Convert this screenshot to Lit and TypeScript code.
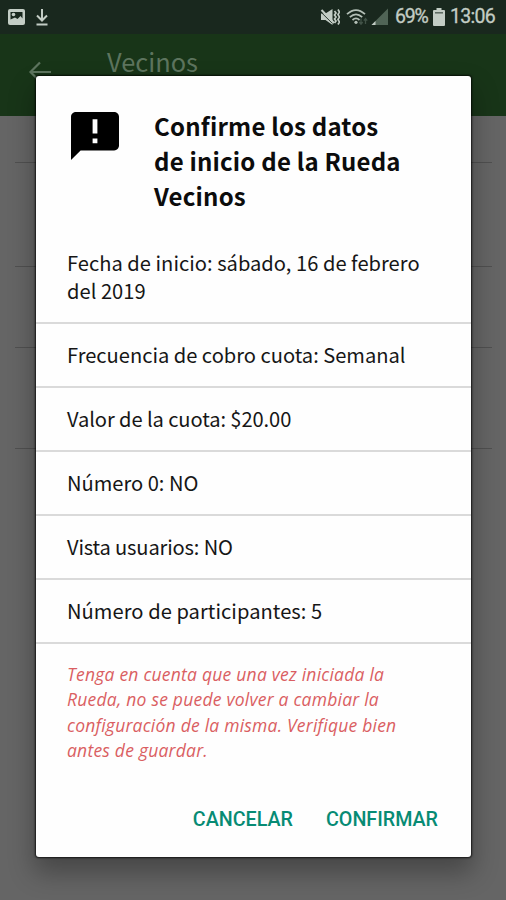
import { LitElement, html, css } from "lit";
import { customElement } from "lit/decorators.js";

const ROWS = [
  { text: "Frecuencia de cobro cuota: Semanal", cls: "" },
  { text: "Valor de la cuota: $20.00", cls: "tight" },
  { text: "Número 0: NO", cls: "" },
  { text: "Vista usuarios: NO", cls: "tighter" },
  { text: "Número de participantes: 5", cls: "loose" },
];

const WARNING = [
  "Tenga en cuenta que una vez iniciada la",
  "Rueda, no se puede volver a cambiar la",
  "configuración de la misma. Verifique bien",
  "antes de guardar.",
];

@customElement("status-bar")
export class StatusBar extends LitElement {
  static styles = css`
    :host {
      display: flex;
      align-items: center;
      height: 34px;
      box-sizing: border-box;
      padding: 0 8px 0 7px;
      background: #19281e;
      color: #c3cdc5;
      font: 400 19.5px/36px Roboto, sans-serif;
      -webkit-text-stroke: 0.3px #c3cdc5;
    }
    svg { display: block; flex: none; }
    .download { margin-left: 8px; }
    .mute { margin-left: auto; }
    .wifi { margin-left: 6px; }
    .signal { margin-left: 3px; }
    .percent { margin-left: 6px; width: 35px; letter-spacing: -1.2px; white-space: nowrap; }
    .battery { margin-left: 3px; }
    .clock { margin-left: 5px; width: 48px; letter-spacing: -0.7px; white-space: nowrap; }
  `;
  render() {
    return html`
      <svg width="19" height="18" viewBox="0 0 19 18">
        <rect x="1" y="1" width="17" height="16" rx="2" fill="#c3cdc5" />
        <path d="M3.5 4h12v6.500l-2-2.500-3 3-2.500-1.500-4.500 2z" fill="#19281e" />
        <circle cx="6.5" cy="6.500" r="1.800" fill="#c3cdc5" />
      </svg>
      <svg class="download" width="16" height="18" viewBox="0 0 16 18" fill="none" stroke="#c3cdc5" stroke-width="2">
        <path d="M8 1v11M3 7.5l5 5 5-5M2.500 16.500h11" />
      </svg>
      <svg class="mute" width="20" height="18" viewBox="0 0 20 18">
        <path d="M1 5.500h4.500l7-4.500v16l-7-5H1z" fill="#c3cdc5" />
        <path d="M0 3.200L12 15" stroke="#19281e" stroke-width="0.900" />
        <path d="M1.500 2L14 15" stroke="#c3cdc5" stroke-width="2" />
        <path d="M14.500 3l1.500 2-1.500 2 1.500 2-1.500 2 1.500 2-1.500 2M18 1.500l1.500 2.500-1.500 2.500 1.500 2.500-1.500 2.500 1.500 2.500-1.500 2.500" fill="none" stroke="#c3cdc5" stroke-width="1.700" />
      </svg>
      <svg class="wifi" width="22" height="18" viewBox="0 0 22 18" fill="none" stroke="#b3bfb6" stroke-width="1.800">
        <path d="M1 6.200Q10 -2 19 6.200M3.800 9.200Q10 3.500 16.200 9.200M6.500 12Q10 8.800 13.500 12" />
        <circle cx="10" cy="14.300" r="1.600" fill="#b3bfb6" stroke="none" />
        <path d="M15 10.500v5.500M13.300 14l1.700 2.200 1.700-2.200M19.500 16v-5.500M17.800 12.700l1.700-2.200 1.700 2.200" stroke="#415247" stroke-width="1.300" />
      </svg>
      <svg class="signal" width="18" height="18" viewBox="0 0 18 18">
        <path d="M17 .5V17H.5z" fill="#506456" />
        <path d="M4.500 13v4H.5z" fill="#c3cdc5" />
      </svg>
      <span class="percent">69%</span>
      <svg class="battery" width="12" height="18" viewBox="0 0 12 18">
        <path d="M3.500 0h5v2H11q1 0 1 1v14q0 1-1 1H1q-1 0-1-1V3q0-1 1-1h2.500z" fill="#c3cdc5" />
        <path d="M2 4.800h8" stroke="#59675e" stroke-width="1.500" />
      </svg>
      <span class="clock">13:06</span>
    `;
  }
}

@customElement("confirm-dialog")
export class ConfirmDialog extends LitElement {
  static styles = css`
    :host {
      display: flex;
      flex-direction: column;
      width: 435px;
      height: 781px;
      background: #fefefe;
      border-radius: 3px;
      box-shadow: 0 0 2px 1px rgba(0, 0, 0, 0.75), 0 14px 26px 2px rgba(0, 0, 0, 0.3);
      color: #161616;
      font: 400 20.1px/28px "Noto Sans CJK SC", "Noto Sans", sans-serif;
    }
    header {
      display: flex;
      align-items: flex-start;
      padding: 32px 0 0 35px;
      height: 139px;
      box-sizing: border-box;
    }
    .alert { flex: none; margin-top: 4px; }
    h1 {
      margin: 0 0 0 35px;
      font-size: 24px;
      line-height: 35px;
      letter-spacing: 0.2px;
      font-weight: 700;
      white-space: nowrap;
      color: #0c0c0c;
    }
    .line { display: block; white-space: nowrap; }
    .row {
      box-sizing: border-box;
      height: 64px;
      padding: 17px 31px;
      border-bottom: 2px solid #dadada;
      white-space: nowrap;
    }
    .tight { letter-spacing: -0.08px; }
    .tighter { letter-spacing: -0.15px; }
    .loose { letter-spacing: 0.06px; }
    .date { height: 109px; padding-top: 34px; letter-spacing: 0.03px; }
    .warning {
      margin: 18px 31px 0;
      height: 104px;
      font: italic 400 17.5px/25.300px "Open Sans", "Noto Sans", sans-serif;
      letter-spacing: 0.22px;
      color: #da5e62;
    }
    footer {
      display: flex;
      justify-content: flex-end;
      gap: 33px;
      padding: 38px 33px 0 0;
    }
    button {
      border: 0;
      padding: 0;
      background: none;
      color: #078b74;
      font: 500 19.7px/32px Roboto, sans-serif;
    }
  `;
  render() {
    return html`
      <header>
        <svg class="alert" width="48" height="48" viewBox="2 2 20 20">
          <path d="M20 2H4c-1.100 0-1.990.9-1.990 2L2 22l4-4h14c1.100 0 2-.9 2-2V4c0-1.100-.9-2-2-2zm-7 9h-2V5h2v6zm0 4h-2v-2h2v2z" />
        </svg>
        <h1>
          <span class="line">Confirme los datos</span>
          <span class="line">de inicio de la Rueda</span>
          <span class="line">Vecinos</span>
        </h1>
      </header>
      <div class="row date">
        <span class="line">Fecha de inicio: sábado, 16 de febrero</span>
        <span class="line">del 2019</span>
      </div>
      ${ROWS.map((r) => html`<div class="row ${r.cls}">${r.text}</div>`)}
      <div class="warning">${WARNING.map((l) => html`<span class="line">${l}</span>`)}</div>
      <footer>
        <button>CANCELAR</button>
        <button>CONFIRMAR</button>
      </footer>
    `;
  }
}

@customElement("app-root")
export class AppRoot extends LitElement {
  static styles = css`
    :host {
      display: block;
      position: relative;
      width: 506px;
      height: 900px;
      overflow: hidden;
      background: #656565;
    }
    .appbar {
      display: flex;
      height: 82px;
      box-sizing: border-box;
      padding-left: 28px;
      background: #183518;
      color: #5d745e;
      font: 400 25.400px/36px "Noto Sans CJK SC", "Noto Sans", sans-serif;
    }
    .back { margin-top: 27px; }
    .name { margin: 9px 0 0 55px; }
    .list { padding: 0 14px 0 15px; }
    .item { box-sizing: border-box; border-bottom: 1px solid #505050; }
    .i1 { height: 47px; }
    .i2 { height: 104px; }
    .i3 { height: 81px; }
    .i4 { height: 101px; }
    confirm-dialog { position: absolute; left: 36px; top: 76px; }
  `;
  render() {
    return html`
      <status-bar></status-bar>
      <div class="appbar">
        <svg class="back" width="24" height="22" viewBox="0 0 24 22" fill="none" stroke="#5d745e" stroke-width="2.200">
          <path d="M23 11H3M12 1.500L2.500 11l9.500 9.500" />
        </svg>
        <span class="name">Vecinos</span>
      </div>
      <div class="list">
        ${[1, 2, 3, 4].map((n) => html`<div class="item i${n}"></div>`)}
      </div>
      <confirm-dialog></confirm-dialog>
    `;
  }
}
